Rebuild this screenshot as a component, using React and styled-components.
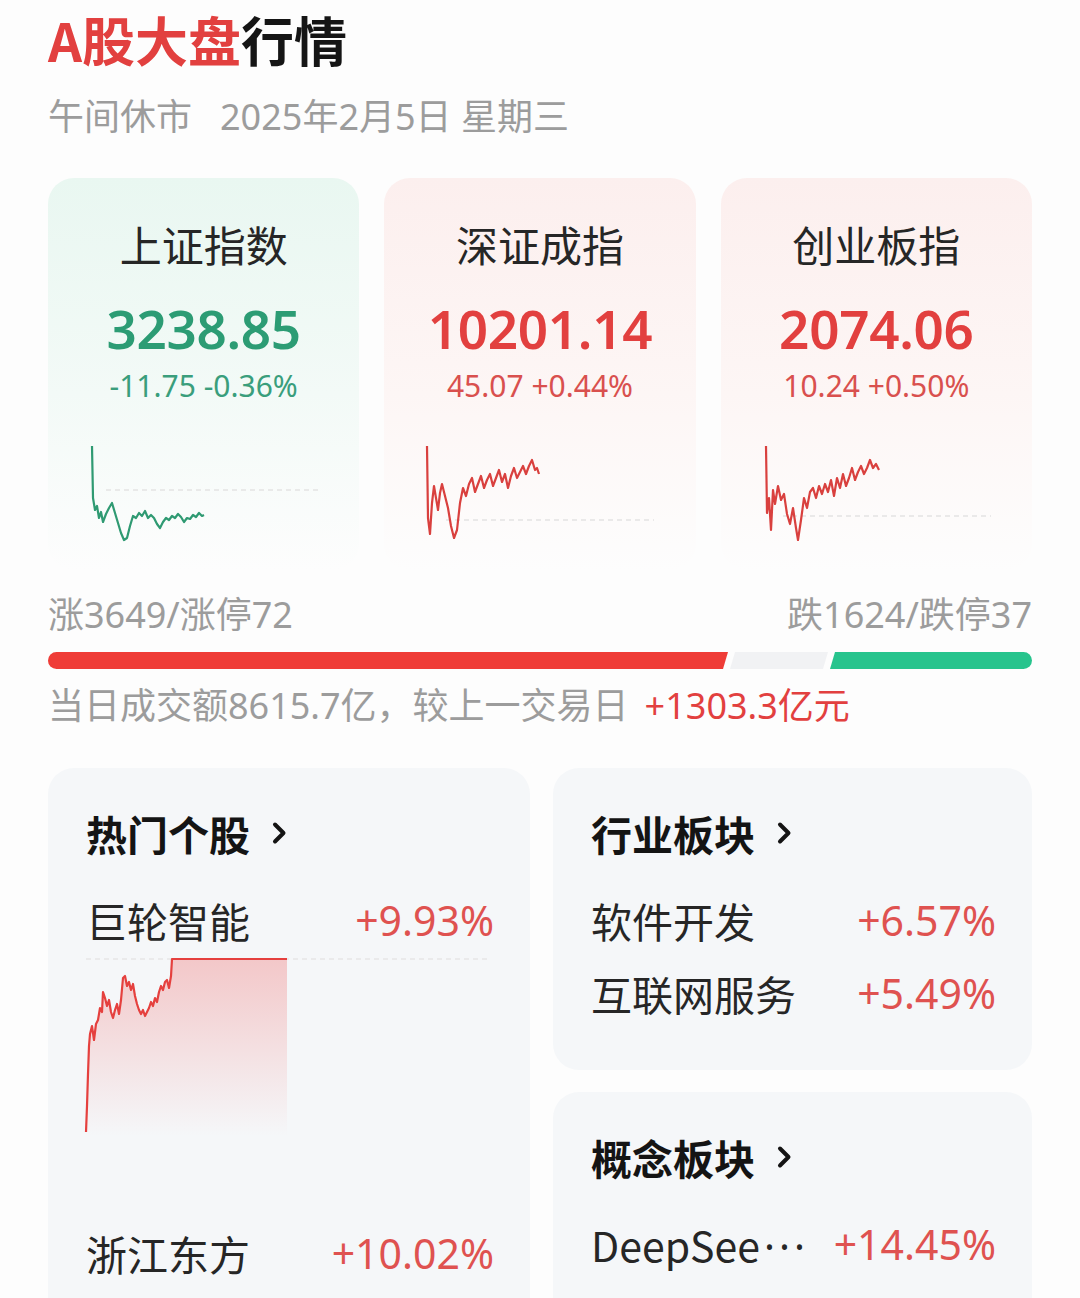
import styled, { createGlobalStyle } from "styled-components";

const RED = "#e2403f";
const GREEN = "#2c9c74";

const GlobalStyle = createGlobalStyle`
  html, body {
    margin: 0;
    padding: 0;
    background: #fdfdfd;
  }
  body {
    font-family: "Noto Sans", "Noto Sans CJK SC", sans-serif;
    color: #222;
  }
`;

const indexes = [
  {
    name: "上证指数",
    value: "3238.85",
    change: "-11.75 -0.36%",
    up: false,
    base: 492,
    origin: [88, 440],
    points: [
      [92, 448], [93, 500], [95, 512], [97, 508], [99, 520], [101, 514], [103, 524],
      [106, 516], [109, 510], [112, 505], [115, 515], [118, 525], [121, 535], [124, 542],
      [127, 540], [130, 528], [133, 518], [136, 520], [139, 515], [142, 518], [145, 513],
      [148, 520], [151, 517], [154, 520], [157, 526], [160, 530], [163, 524], [166, 520],
      [169, 522], [172, 518], [175, 520], [178, 516], [181, 519], [184, 524], [187, 520],
      [190, 521], [193, 517], [196, 519], [199, 515], [202, 518], [204, 517],
    ],
  },
  {
    name: "深证成指",
    value: "10201.14",
    change: "45.07 +0.44%",
    up: true,
    base: 522,
    origin: [425, 440],
    points: [
      [428, 448], [429, 520], [431, 536], [433, 505], [435, 488], [437, 500], [439, 512],
      [441, 495], [443, 486], [446, 498], [449, 510], [452, 528], [455, 540], [458, 532],
      [461, 505], [464, 490], [467, 498], [470, 486], [473, 480], [476, 494], [479, 486],
      [482, 478], [485, 490], [488, 482], [491, 476], [494, 488], [497, 480], [500, 472],
      [503, 484], [506, 476], [509, 490], [512, 478], [515, 470], [518, 480], [521, 474],
      [524, 468], [527, 476], [530, 468], [533, 462], [536, 472], [538, 470], [540, 476],
    ],
  },
  {
    name: "创业板指",
    value: "2074.06",
    change: "10.24 +0.50%",
    up: true,
    base: 518,
    origin: [760, 440],
    points: [
      [765, 448], [766, 515], [768, 500], [770, 532], [772, 492], [774, 506], [777, 488],
      [780, 502], [783, 496], [786, 516], [789, 526], [792, 510], [795, 530], [797, 542],
      [800, 522], [803, 500], [806, 510], [809, 494], [812, 490], [815, 500], [818, 488],
      [821, 496], [824, 486], [827, 494], [830, 482], [833, 498], [836, 480], [839, 490],
      [842, 476], [845, 488], [848, 480], [851, 470], [854, 482], [857, 474], [860, 468],
      [863, 476], [866, 470], [869, 462], [872, 470], [875, 466], [878, 472],
    ],
  },
];

// hot stock intraday line, relative to chart box
const hotPoints = [
  [0, 176], [1, 150], [2, 118], [3, 90], [4, 78], [6, 70], [8, 84], [10, 68], [12, 64],
  [14, 52], [16, 56], [17, 36], [19, 42], [21, 50], [23, 44], [25, 56], [27, 62],
  [29, 54], [31, 48], [33, 58], [35, 44], [37, 22], [39, 20], [41, 30], [43, 26],
  [45, 34], [47, 28], [49, 40], [51, 48], [53, 54], [55, 58], [57, 54], [59, 60],
  [61, 56], [63, 52], [65, 46], [67, 50], [69, 42], [71, 46], [73, 36], [75, 30],
  [77, 34], [79, 26], [81, 24], [83, 32], [85, 20], [86, 3], [201, 3],
];

const Page = styled.div`
  padding: 0 48px;
  height: 1298px;
  overflow: hidden;
`;

const Title = styled.h1`
  margin: 0;
  font-family: "Noto Sans CJK SC", sans-serif;
  font-size: 53px;
  line-height: 78px;
  font-weight: 600;
  color: #151515;
  span {
    color: ${RED};
    font-weight: 700;
  }
`;

const SubTitle = styled.div`
  margin-top: 16px;
  display: flex;
  gap: 28px;
  font-size: 36px;
  line-height: 46px;
  color: #9c9c9c;
`;

const CardRow = styled.div`
  margin-top: 38px;
  display: grid;
  grid-template-columns: repeat(3, 1fr);
  gap: 25px;
`;

const Card = styled.div`
  height: 392px;
  border-radius: 26px;
  padding-top: 39px;
  box-sizing: border-box;
  display: flex;
  flex-direction: column;
  align-items: center;
  background: ${(p) =>
    p.$up
      ? "linear-gradient(180deg, #fcefee 0%, #fdf6f5 55%, #fdfdfd 100%)"
      : "linear-gradient(180deg, #e9f7f1 0%, #f3faf7 55%, #fdfdfd 100%)"};
`;

const CardName = styled.div`
  font-family: "Noto Sans CJK SC", sans-serif;
  font-size: 42px;
  line-height: 54px;
  color: #262626;
`;

const CardValue = styled.div`
  margin-top: 26px;
  font-size: 53px;
  line-height: 64px;
  font-weight: 600;
  color: ${(p) => (p.$up ? RED : GREEN)};
  letter-spacing: -0.3px;
`;

const CardChange = styled.div`
  margin-top: 6px;
  font-size: 30px;
  line-height: 38px;
  color: ${(p) => (p.$up ? "#d9504e" : "#3a9e7c")};
`;

const Spark = styled.svg`
  align-self: flex-start;
  margin: 33px 0 0 40px;
  width: 240px;
  height: 110px;
  overflow: visible;
`;

const Breadth = styled.div`
  margin-top: 22px;
  display: flex;
  justify-content: space-between;
  font-size: 36px;
  line-height: 46px;
  color: #9c9c9c;
`;

const Bar = styled.div`
  margin-top: 14px;
  height: 17px;
  display: flex;
  border-radius: 9px;
  overflow: hidden;
`;

const Seg = styled.div`
  height: 100%;
  background: ${(p) => p.$color};
  clip-path: ${(p) =>
    p.$first
      ? "polygon(0 0, 100% 0, calc(100% - 5px) 100%, 0 100%)"
      : p.$last
      ? "polygon(5px 0, 100% 0, 100% 100%, 0 100%)"
      : "polygon(5px 0, 100% 0, calc(100% - 5px) 100%, 0 100%)"};
  margin-right: ${(p) => (p.$last ? 0 : "2px")};
`;

const Turnover = styled.div`
  margin-top: 14px;
  font-size: 36px;
  line-height: 46px;
  color: #9c9c9c;
  span {
    color: ${RED};
    margin-left: 16px;
  }
`;

const Lower = styled.div`
  margin-top: 39px;
  display: grid;
  grid-template-columns: 482px 1fr;
  gap: 23px;
  align-items: start;
`;

const Column = styled.div`
  display: flex;
  flex-direction: column;
  gap: 22px;
`;

const Panel = styled.div`
  background: #f5f7f9;
  border-radius: 26px;
  padding: 40px 36px 41px 38px;
  min-height: ${(p) => p.$tall || 0}px;
  box-sizing: border-box;
`;

const PanelHead = styled.div`
  display: flex;
  align-items: center;
  gap: 20px;
  font-family: "Noto Sans CJK SC", sans-serif;
  font-size: 41px;
  line-height: 50px;
  font-weight: 700;
  color: #141414;
  margin-bottom: 25px;
`;

const Row = styled.div`
  display: flex;
  justify-content: space-between;
  align-items: center;
  height: 73px;
  font-size: 41px;
`;

const RowName = styled.span`
  font-family: "Noto Sans CJK SC", sans-serif;
  color: #262626;
`;

const Ellipsis = styled.span`
  font-family: "Noto Sans", sans-serif;
  letter-spacing: 4px;
  margin-left: 4px;
`;

const RowPct = styled.span`
  color: #df5250;
`;

const HotChart = styled.svg`
  display: block;
  width: 408px;
  height: 260px;
  overflow: visible;
`;

const Chevron = () => (
  <svg width="18" height="28" viewBox="0 0 18 28">
    <path d="M5 5.5 L13.5 14 L5 22.5" fill="none" stroke="#141414" strokeWidth="4" strokeLinecap="round" strokeLinejoin="round" />
  </svg>
);

const toPts = (arr, ox, oy) => arr.map(([x, y]) => `${x - ox},${y - oy}`).join(" ");

const App = () => {
  const hotLine = hotPoints.map(([x, y]) => `${x},${y}`).join(" ");
  return (
    <Page>
      <GlobalStyle />
      <Title>
        <span>A股大盘</span>行情
      </Title>
      <SubTitle>
        <span>午间休市</span>
        <span>2025年2月5日 星期三</span>
      </SubTitle>

      <CardRow>
        {indexes.map((ix) => {
          const [ox, oy] = ix.origin;
          const color = ix.up ? "#d9403e" : "#2f9a72";
          return (
            <Card key={ix.name} $up={ix.up}>
              <CardName>{ix.name}</CardName>
              <CardValue $up={ix.up}>{ix.value}</CardValue>
              <CardChange $up={ix.up}>{ix.change}</CardChange>
              <Spark viewBox="0 0 240 110">
                <line x1={ix.up ? 22 : 18} y1={ix.base - oy} x2="230" y2={ix.base - oy} stroke="#e4e4e4" strokeWidth="1.5" strokeDasharray="5 4" />
                <polyline points={toPts(ix.points, ox, oy)} fill="none" stroke={color} strokeWidth="2.2" strokeLinejoin="round" />
              </Spark>
            </Card>
          );
        })}
      </CardRow>

      <Breadth>
        <span>涨3649/涨停72</span>
        <span>跌1624/跌停37</span>
      </Breadth>
      <Bar>
        <Seg $first $color="#ef3c37" style={{ width: 680 }} />
        <Seg $color="#f1f2f4" style={{ width: 98 }} />
        <Seg $last $color="#27c48d" style={{ flex: 1 }} />
      </Bar>
      <Turnover>
        当日成交额8615.7亿，较上一交易日<span>+1303.3亿元</span>
      </Turnover>

      <Lower>
        <Panel $tall={560}>
          <PanelHead>
            热门个股 <Chevron />
          </PanelHead>
          <Row>
            <RowName>巨轮智能</RowName>
            <RowPct>+9.93%</RowPct>
          </Row>
          <HotChart viewBox="0 0 408 260">
            <defs>
              <linearGradient id="hotFill" x1="0" y1="0" x2="0" y2="1">
                <stop offset="0%" stopColor="#ef6b6b" stopOpacity="0.34" />
                <stop offset="100%" stopColor="#ef6b6b" stopOpacity="0" />
              </linearGradient>
            </defs>
            <line x1="0" y1="3" x2="404" y2="3" stroke="#e6e6e6" strokeWidth="1.5" strokeDasharray="5 4" />
            <polygon points={`0,180 ${hotLine} 201,180`} fill="url(#hotFill)" />
            <polyline points={hotLine} fill="none" stroke="#e5403e" strokeWidth="2.2" strokeLinejoin="round" />
          </HotChart>
          <Row>
            <RowName>浙江东方</RowName>
            <RowPct>+10.02%</RowPct>
          </Row>
        </Panel>

        <Column>
          <Panel>
            <PanelHead>
              行业板块 <Chevron />
            </PanelHead>
            <Row>
              <RowName>软件开发</RowName>
              <RowPct>+6.57%</RowPct>
            </Row>
            <Row>
              <RowName>互联网服务</RowName>
              <RowPct>+5.49%</RowPct>
            </Row>
          </Panel>
          <Panel $tall={240}>
            <PanelHead>
              概念板块 <Chevron />
            </PanelHead>
            <Row>
              <RowName>
                DeepSee<Ellipsis>···</Ellipsis>
              </RowName>
              <RowPct>+14.45%</RowPct>
            </Row>
          </Panel>
        </Column>
      </Lower>
    </Page>
  );
};

export default App;
